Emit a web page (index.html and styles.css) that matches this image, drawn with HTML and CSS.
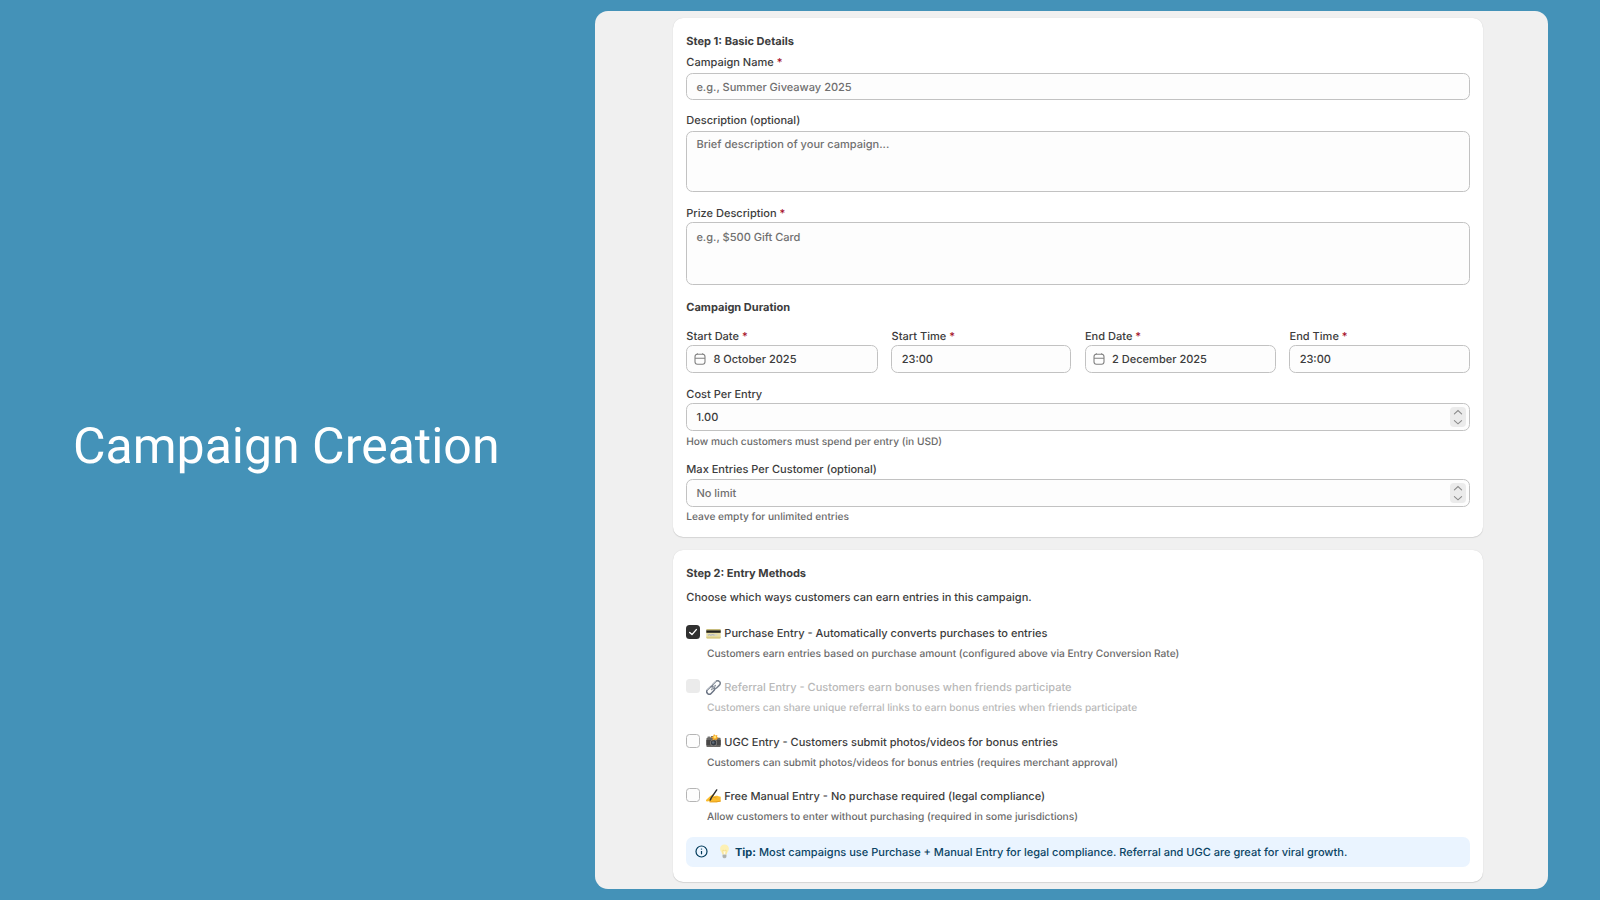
FILE: index.html
```html
<!DOCTYPE html>
<html lang="en">
<head>
<meta charset="utf-8">
<title>Campaign Creation</title>
<link rel="stylesheet" href="styles.css">
</head>
<body>
<main class="slide">
  <section class="intro"><h1 class="intro-title">Campaign Creation</h1></section>
  <section class="panel">
    <div class="card card-details">
      <h2 class="heading">Step 1: Basic Details</h2>
      <div class="field field-name">
        <div class="label">Campaign Name <span class="req">*</span></div>
        <div class="input placeholder">e.g., Summer Giveaway 2025</div>
      </div>
      <div class="field field-desc">
        <div class="label">Description (optional)</div>
        <div class="input area placeholder">Brief description of your campaign...</div>
      </div>
      <div class="field field-prize">
        <div class="label">Prize Description <span class="req">*</span></div>
        <div class="input area placeholder">e.g., $500 Gift Card</div>
      </div>
      <h2 class="heading heading-duration">Campaign Duration</h2>
      <div class="duration">
        <div class="field">
          <div class="label">Start Date <span class="req">*</span></div>
          <div class="input"><svg class="calendar" viewBox="0 0 12 12"><rect x="1" y="1.3" width="10" height="9.9" rx="2.4"/><path d="M1 5.2h10M3.3 .3v1M8.7 .3v1"/></svg>8 October 2025</div>
        </div>
        <div class="field">
          <div class="label">Start Time <span class="req">*</span></div>
          <div class="input">23:00</div>
        </div>
        <div class="field">
          <div class="label">End Date <span class="req">*</span></div>
          <div class="input"><svg class="calendar" viewBox="0 0 12 12"><rect x="1" y="1.3" width="10" height="9.9" rx="2.4"/><path d="M1 5.2h10M3.3 .3v1M8.7 .3v1"/></svg>2 December 2025</div>
        </div>
        <div class="field">
          <div class="label">End Time <span class="req">*</span></div>
          <div class="input">23:00</div>
        </div>
      </div>
      <div class="field field-cost">
        <div class="label">Cost Per Entry</div>
        <div class="input">1.00<span class="spinner"><svg viewBox="0 0 16 20"><path d="M4.4 6.8 8 3.6l3.6 3.2M4.4 13.6 8 16.8l3.6-3.2"/></svg></span></div>
        <div class="help">How much customers must spend per entry (in USD)</div>
      </div>
      <div class="field field-max">
        <div class="label">Max Entries Per Customer (optional)</div>
        <div class="input placeholder">No limit<span class="spinner"><svg viewBox="0 0 16 20"><path d="M4.4 6.8 8 3.6l3.6 3.2M4.4 13.6 8 16.8l3.6-3.2"/></svg></span></div>
        <div class="help">Leave empty for unlimited entries</div>
      </div>
    </div>

    <div class="card card-methods">
      <h2 class="heading">Step 2: Entry Methods</h2>
      <p class="lead">Choose which ways customers can earn entries in this campaign.</p>
      <div class="methods">
        <div class="method">
          <span class="check checked"><svg viewBox="0 0 14 14"><path d="M3.7 7.4 6 9.6l4.3-5"/></svg></span>
          <div class="method-body">
            <div class="method-title"><svg class="emoji" viewBox="0 0 15 15"><rect x=".3" y="2.9" width="14.4" height="9.6" rx="1" fill="#e9dfa5"/><path d="M.3 4.2h14.4v2.6H.3z" fill="#24231e"/><path d="M.3 3.9a1 1 0 0 1 1-1h12.4a1 1 0 0 1 1 1v.4H.3z" fill="#c7bc7d"/><path d="M1.6 8.2h9.6v1.5H1.6z" fill="#d5d4cb"/><path d="M2 9.2l1.4-.6 1.4.6 1.5-.6 2.2.5" stroke="#8c93a5" stroke-width=".5" fill="none"/><path d="M.4 10.7h14.2v.8a1 1 0 0 1-1 1H1.4a1 1 0 0 1-1-1z" fill="#d9cb83"/></svg>Purchase Entry - Automatically converts purchases to entries</div>
            <div class="help">Customers earn entries based on purchase amount (configured above via Entry Conversion Rate)</div>
          </div>
        </div>
        <div class="method disabled">
          <span class="check"></span>
          <div class="method-body">
            <div class="method-title"><svg class="emoji" viewBox="0 0 15 15"><g fill="none" stroke-linecap="round" transform="rotate(-45 7.5 7.5)"><rect x="-.9" y="4.9" width="8.7" height="5.1" rx="2.5" stroke="#6b7484" stroke-width="1.5"/><rect x="7.2" y="4.9" width="8.7" height="5.1" rx="2.5" stroke="#7b8490" stroke-width="1.5"/><path d="M4.8 7.5h5.4" stroke="#8a929c" stroke-width="1.4"/><path d="M1.4 4.8h4.4M9.2 4.8h4.4M5.2 7.2h4" stroke="#d8dce0" stroke-width=".7"/></g></svg>Referral Entry - Customers earn bonuses when friends participate</div>
            <div class="help">Customers can share unique referral links to earn bonus entries when friends participate</div>
          </div>
        </div>
        <div class="method">
          <span class="check"></span>
          <div class="method-body">
            <div class="method-title"><svg class="emoji" viewBox="0 0 15 15"><path d="M1.6 2.5h2.6v1.7H1.6z" fill="#777"/><path d="M.4 4.9c0-.8.4-1.2 1.2-1.2h2.6L5.4 2h4.4l1.2 1.7h2.5c.8 0 1.2.4 1.2 1.2v7c0 .7-.4 1.1-1.1 1.1h-12C.8 13 .4 12.6.4 11.9z" fill="#6a6865"/><path d="M.4 6h14.3v5.2H.4z" fill="#484746"/><circle cx="7.6" cy="8.8" r="3.5" fill="#85827e"/><circle cx="7.6" cy="8.8" r="2.7" fill="#343a42"/><circle cx="7.2" cy="8.5" r="1.3" fill="#606c78"/><path d="M8 .1 9.3 1.5l2-.5-.2 1.9 1.7 1-1.8.8-.3 1.6-1.8-.9-2.2 1 .1-2L5 3.2l2-.7z" fill="#f6a623"/><circle cx="8.9" cy="3.1" r="1.4" fill="#ffe36f"/></svg>UGC Entry - Customers submit photos/videos for bonus entries</div>
            <div class="help">Customers can submit photos/videos for bonus entries (requires merchant approval)</div>
          </div>
        </div>
        <div class="method">
          <span class="check"></span>
          <div class="method-body">
            <div class="method-title"><svg class="emoji" viewBox="0 0 15 15"><path d="M.2 10.8 4.3 7l3-1.9c.9-.5 1.6.3.9 1L6.7 7.500l2.500-.6c2.400-.3 3.800.7 5.500.9v4.700l-4 .8H4.200c-1 0-1.200-.9-.4-1.300l-2.600.5c-1 .2-1.600-1-1-1.700z" fill="#fbbd2e"/><path d="M4.200 13.300h6.500l4-.8v-1c-2.300.9-4.800 1-7 1H3.600c-.2.300 0 .8.600.8z" fill="#e39a1c"/><path d="M3.200 11l3.400-1.200M7 8.100l3.500.9" fill="none" stroke="#d98a13" stroke-width=".5"/><path d="M10.700.9 5.100 9.200 4.300 11.100" fill="none" stroke="#292a2c" stroke-width="1.400" stroke-linecap="round"/></svg>Free Manual Entry - No purchase required (legal compliance)</div>
            <div class="help">Allow customers to enter without purchasing (required in some jurisdictions)</div>
          </div>
        </div>
      </div>
      <div class="tip">
        <svg class="info" viewBox="0 0 13 13"><circle cx="6.5" cy="6.5" r="5.5"/><path d="M6.5 6v3.3"/><path d="M6.5 3.6v1"/></svg>
        <svg class="emoji bulb" viewBox="0 0 15 15"><path d="M7.5.6c2.7 0 4.4 1.9 4.4 4.2 0 2.7-2 3.5-2.3 5.8H5.4C5.1 8.3 3.1 7.5 3.1 4.8 3.1 2.5 4.8.6 7.5.6z" fill="#fcf0b4"/><path d="M6.2 10.4 5.9 6l1.6.9L9.1 6l-.3 4.4" fill="#fffbe2" stroke="#f2d36c" stroke-width=".6"/><path d="M5.6 10.6h3.8v2.2c0 .9-.8 1.5-1.9 1.5s-1.9-.6-1.9-1.5z" fill="#b9bdb9"/><path d="M5.6 11.8h3.8M5.8 13h3.4" stroke="#8e9492" stroke-width=".4"/></svg>
        <span class="tip-text"><b>Tip:</b> Most campaigns use Purchase + Manual Entry for legal compliance. Referral and UGC are great for viral growth.</span>
      </div>
    </div>
  </section>
</main>
</body>
</html>
```
FILE: styles.css
```css
* { box-sizing: border-box; }

body {
  margin: 0;
  background: #4492b8;
  text-rendering: geometricPrecision;
}

.slide {
  display: flex;
  width: 1600px;
  height: 900px;
  padding: 11px 52px 11px 0;
  background: #4492b8;
  overflow: hidden;
}

.intro {
  width: 595px;
  padding: 406px 0 0 73px;
}

.intro-title {
  margin: 0;
  font: 400 50px/60px Roboto, sans-serif;
  color: #fff;
  white-space: nowrap;
}

.panel {
  display: flex;
  flex-direction: column;
  gap: 13px;
  width: 953px;
  height: 878px;
  padding: 7px 65px 7px 78px;
  border-radius: 13px;
  background: #f0f0f0;
  font: 450 11.04px/17px Inter, sans-serif;
  color: #3c3c3c;
  white-space: nowrap;
}

.card {
  padding: 15px 13px 0;
  border-radius: 10px;
  background: #fff;
  box-shadow: 0 1px 1px rgba(0, 0, 0, .1), 0 0 1px rgba(0, 0, 0, .15);
}

.card-details { height: 519px; }
.card-methods { height: 332px; }

.heading {
  margin: 0;
  font-size: 11.04px;
  font-weight: 650;
  line-height: 17px;
}

.label, .heading, .lead, .field > .help { padding-left: .3px; }

.field {
  display: flex;
  flex-direction: column;
}

.field-name { margin-top: 4px; }
.field-desc { margin-top: 12px; }
.field-prize { margin-top: 13px; }
.field-name .label,
.field-desc .label { margin-bottom: 2px; }
.heading-duration { margin-top: 14px; }
.field-cost { margin-top: 13px; }
.field-max { margin-top: 10px; }
.field-max .label { margin-bottom: 1px; }

.req { color: #a30a24; }

.input {
  display: flex;
  align-items: center;
  height: 27px;
  padding: 1px 3px 0 9.4px;
  border: 1px solid #c2c2c2;
  border-radius: 6.5px;
  background: #fdfdfd;
}

.placeholder { color: #707070; }

.area {
  align-items: flex-start;
  height: 61px;
  padding-top: 4px;
}

.field-prize .area { height: 63px; padding-top: 6px; }

.duration {
  display: grid;
  grid-template-columns: 191.7px 179.8px 191px 180.7px;
  gap: 13.6px;
  margin-top: 12px;
}

.duration .input,
.field-cost .input,
.field-max .input { height: 28px; }

.calendar {
  width: 12px;
  height: 12px;
  margin: -2px 7.4px 0 -2.4px;
  fill: none;
  stroke: #808080;
  stroke-width: 1.1;
}

.spinner {
  width: 16px;
  height: 20px;
  margin-left: auto;
  margin-top: -1px;
  border-radius: 4px;
  background: #ebebeb;
}

.spinner svg {
  display: block;
  width: 16px;
  height: 20px;
  fill: none;
  stroke: #8a8a8a;
  stroke-width: 1.1;
  stroke-linecap: round;
}

.help {
  font-size: 10.18px;
  color: #6a6a6a;
}

.field-cost .help { margin-top: 3px; }
.field-max .help { margin-top: 2px; }

.lead { margin: 7px 0 0; }

.methods {
  display: flex;
  flex-direction: column;
  gap: 16.4px;
  margin-top: 19px;
}

.method { display: flex; gap: 7px; }
.method-body { display: flex; flex-direction: column; gap: 4px; }
.method-title { display: flex; align-items: center; }

.check {
  width: 14px;
  height: 14px;
  border: 1px solid #b5b5b5;
  border-radius: 3.5px;
  background: #fdfdfd;
}

.checked { border: 0; background: #303030; }

.checked svg {
  display: block;
  fill: none;
  stroke: #fff;
  stroke-width: 1.4;
  stroke-linecap: round;
  stroke-linejoin: round;
}

.disabled, .disabled .help { color: #b8b8b8; }
.disabled .check { border: 0; background: #ebebeb; }

.emoji {
  width: 15px;
  height: 15px;
  margin: -1px 3px 0 -.7px;
  flex: none;
}

.tip {
  display: flex;
  align-items: center;
  height: 30px;
  margin-top: 10.8px;
  padding: 1px 9px 0;
  border-radius: 7px;
  background: #eaf4ff;
  color: #0a4464;
}

.tip-text { padding-top: 1px; }
.tip b { font-weight: 650; }

.info {
  width: 13px;
  height: 13px;
  margin-top: -1px;
  fill: none;
  stroke: #003a5a;
  stroke-width: 1.2;
}

.bulb { margin: -1px 3px 0 9px; }
```
